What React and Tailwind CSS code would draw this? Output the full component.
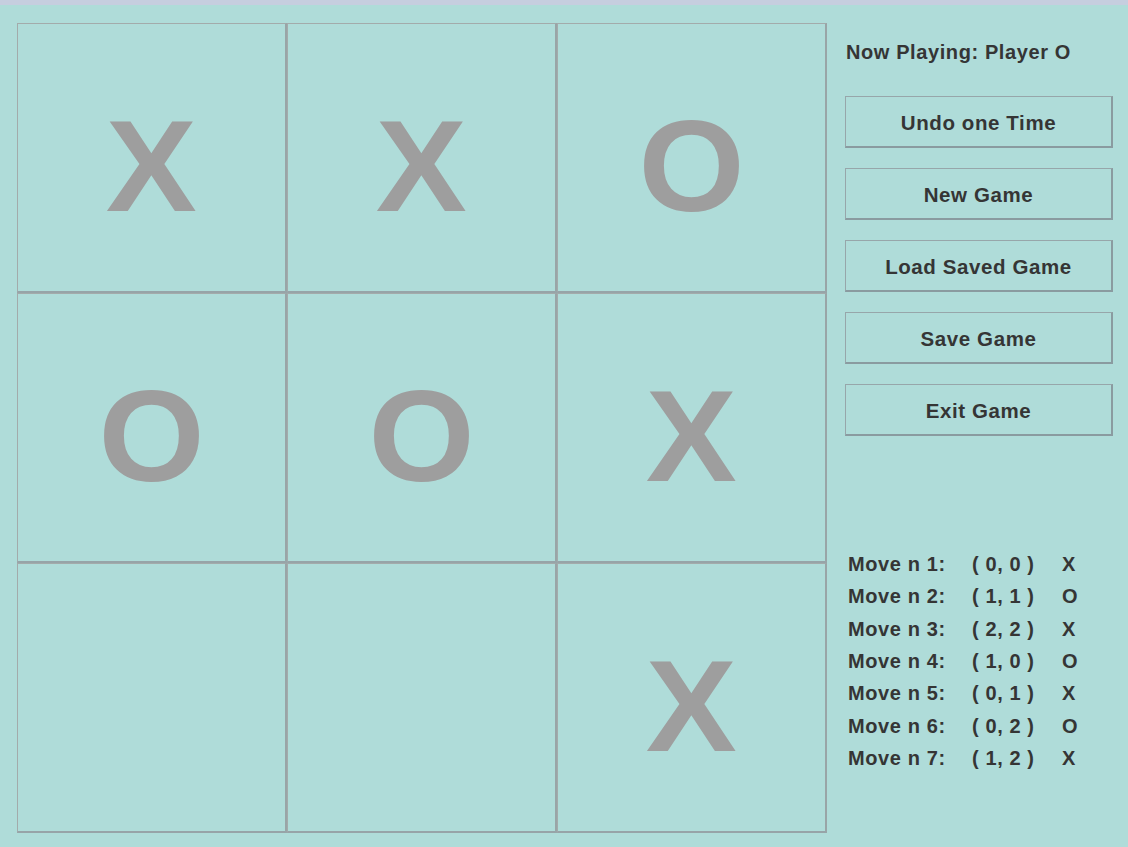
const board = ['X', 'X', 'O', 'O', 'O', 'X', '', '', 'X']

const buttons = ['Undo one Time', 'New Game', 'Load Saved Game', 'Save Game', 'Exit Game']

const moves = [
  { n: 1, pos: '( 0, 0 )', p: 'X' },
  { n: 2, pos: '( 1, 1 )', p: 'O' },
  { n: 3, pos: '( 2, 2 )', p: 'X' },
  { n: 4, pos: '( 1, 0 )', p: 'O' },
  { n: 5, pos: '( 0, 1 )', p: 'X' },
  { n: 6, pos: '( 0, 2 )', p: 'O' },
  { n: 7, pos: '( 1, 2 )', p: 'X' },
]

const font = { fontFamily: '"Liberation Sans", Arial, sans-serif' }

export default function App() {
  return (
    <div className="w-[1128px] h-[847px] bg-[#afdcd9] overflow-hidden" style={font}>
      <div className="h-[5px] bg-[#c6cedf]" />
      <div className="flex pt-[18px] pl-[17px]">
        <div className="grid grid-cols-3 w-[810px]">
          {board.map((mark, i) => (
            <div
              key={i}
              className="w-[270px] h-[270px] flex items-center justify-center border-t border-l border-r-2 border-b-2 border-[#a3abab] border-r-[#99a5a7] border-b-[#97a4a8]"
            >
              <span className="text-[130px] leading-none font-bold text-[#9e9e9e] mt-[16px] scale-x-105">
                {mark}
              </span>
            </div>
          ))}
        </div>

        <div className="ml-[18px] w-[268px] text-[#353535] font-bold tracking-[0.6px]">
          <div className="text-[20px] leading-[23px] mt-[18px] ml-[1px]">Now Playing: Player O</div>
          <div className="flex flex-col gap-[20px] mt-[32px]">
            {buttons.map((b) => (
              <div
                key={b}
                className="h-[52px] flex items-center justify-center pt-[3px] text-[20.5px] border border-[#97a6aa] border-b-2 border-r-2 border-b-[#8a9ba0] border-r-[#8a9ba0]"
              >
                {b}
              </div>
            ))}
          </div>
          <div className="mt-[112px] ml-[3px] text-[20px]">
            {moves.map((m) => (
              <div key={m.n} className="flex h-[32.33px] leading-[32.33px]">
                <span className="w-[124px]">Move n {m.n}:</span>
                <span className="w-[90px]">{m.pos}</span>
                <span>{m.p}</span>
              </div>
            ))}
          </div>
        </div>
      </div>
    </div>
  )
}
